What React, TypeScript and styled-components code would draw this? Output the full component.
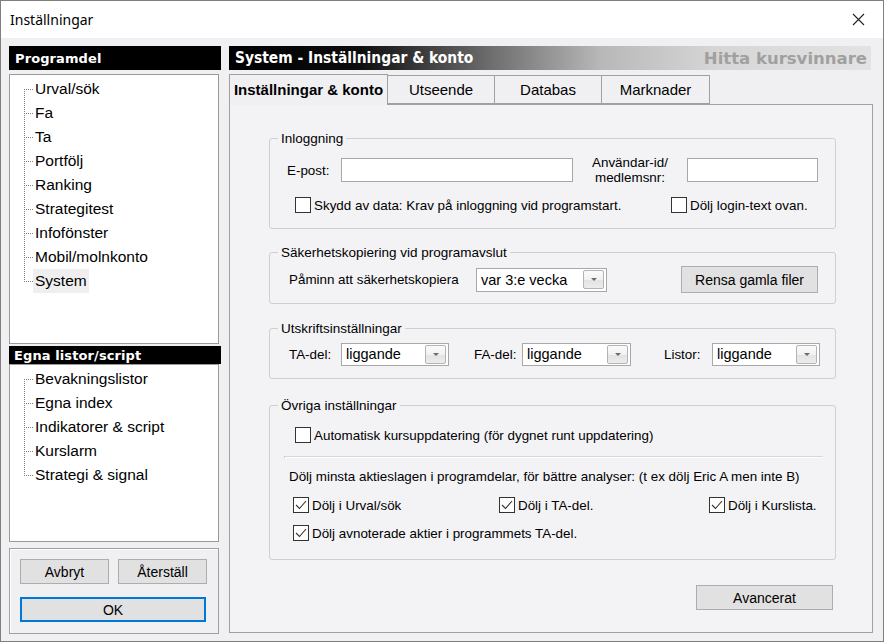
import React from 'react';
import styled, { createGlobalStyle, css } from 'styled-components';

const GlobalStyle = createGlobalStyle`
  html, body {
    margin: 0;
    padding: 0;
    background: #ffffff;
  }

  * {
    box-sizing: border-box;
  }
`;

const uiFont = `'Liberation Sans', Arial, sans-serif`;

const Window = styled.div`
  width: 884px;
  height: 642px;
  border: 1px solid #7f7f7f;
  background: #f0f0f3;
  display: flex;
  flex-direction: column;
  font-family: ${uiFont};
  color: #000;
  overflow: hidden;
`;

const TitleBar = styled.div`
  height: 37px;
  flex-shrink: 0;
  background: #ffffff;
  display: flex;
  align-items: center;
  justify-content: space-between;
  padding: 0 15px 0 9px;
`;

const TitleText = styled.span`
  font-family: 'Noto Sans', 'Open Sans', sans-serif;
  font-size: 14px;
  color: #000;
`;

const CloseButton = styled.span`
  display: flex;
  align-items: center;
  justify-content: center;
  width: 20px;
  height: 20px;
`;

const Body = styled.div`
  flex: 1;
  display: flex;
  gap: 8px;
  padding: 8px 0 0 8px;
`;

const LeftColumn = styled.div`
  width: 212px;
  display: flex;
  flex-direction: column;
`;

const SectionHeader = styled.div<{ $height: number; $gap: number }>`
  height: ${(p) => p.$height}px;
  margin-top: ${(p) => p.$gap}px;
  background: #000;
  color: #fff;
  font-family: 'DejaVu Sans', Verdana, sans-serif;
  font-weight: bold;
  font-size: 13px;
  display: flex;
  align-items: center;
  padding-left: ${(p) => (p.$height > 20 ? 6 : 5)}px;
  letter-spacing: 0.1px;
`;

const TreeBox = styled.div<{ $height: number; $gap: number }>`
  width: 210px;
  height: ${(p) => p.$height}px;
  margin-top: ${(p) => p.$gap}px;
  background: #fff;
  border: 1px solid #9a9a9a;
  padding: 2px 0 0 14px;
`;

const TreeRow = styled.div`
  display: flex;
  align-items: center;
  height: 24px;
`;

const dots = (dir: string) =>
  `repeating-linear-gradient(${dir}, #808080 0 1px, transparent 1px 2px)`;

const Connector = styled.span<{ $pos: 'first' | 'mid' | 'last' }>`
  width: 9px;
  height: 24px;
  flex-shrink: 0;
  background-image: ${dots('to bottom')}, ${dots('to right')};
  background-repeat: no-repeat;
  ${(p) =>
    p.$pos === 'first'
      ? css`
          background-size: 1px 12px, 9px 1px;
          background-position: 0 12px, 0 12px;
        `
      : p.$pos === 'last'
        ? css`
            background-size: 1px 13px, 9px 1px;
            background-position: 0 0, 0 12px;
          `
        : css`
            background-size: 1px 24px, 9px 1px;
            background-position: 0 0, 0 12px;
          `}
`;

const TreeLabel = styled.span<{ $selected?: boolean }>`
  height: 24px;
  line-height: 24px;
  padding: 0 2px;
  font-size: 15.5px;
  background: ${(p) => (p.$selected ? '#efefef' : 'transparent')};
  white-space: nowrap;
`;

const ButtonPanel = styled.div`
  width: 210px;
  height: 86px;
  margin-top: 6px;
  border: 1px solid #a0a0a0;
  box-shadow: inset 1px 1px 0 #ffffff;
  padding: 10px 0 0 10px;
  display: flex;
  flex-direction: column;
  gap: 13px;
`;

const ButtonRow = styled.div`
  display: flex;
  gap: 9px;
`;

const Button = styled.button<{ $width: number; $height?: number; $primary?: boolean; $ml?: number }>`
  width: ${(p) => p.$width}px;
  height: ${(p) => p.$height ?? 25}px;
  margin-left: ${(p) => p.$ml ?? 0}px;
  background: #e1e1e1;
  border: ${(p) => (p.$primary ? '2px solid #0078d7' : '1px solid #adadad')};
  font-family: ${uiFont};
  font-size: 14px;
  color: #000;
  padding: 0;
  flex-shrink: 0;
`;

const RightColumn = styled.div`
  width: 644px;
  display: flex;
  flex-direction: column;
`;

const PageHeader = styled.div`
  height: 24px;
  background: linear-gradient(
    to right,
    #000 0%,
    #0c0c0c 20%,
    #6a6a6a 40%,
    #b8b8b8 58%,
    #d6d6d6 76%,
    #e3e3e3 100%
  );
  display: flex;
  align-items: center;
  justify-content: space-between;
  padding: 0 4px 0 6px;
  margin-right: 2px;
`;

const PageTitle = styled.span`
  font-family: 'DejaVu Sans Condensed', 'DejaVu Sans', sans-serif;
  font-weight: bold;
  font-size: 15.4px;
  color: #fff;
`;

const Slogan = styled.span`
  font-family: 'DejaVu Sans', Verdana, sans-serif;
  font-weight: bold;
  font-size: 16.5px;
  color: #a0a0a0;
`;

const TabRow = styled.div`
  height: 30px;
  margin-top: 4px;
  display: flex;
  align-items: flex-end;
  position: relative;
  z-index: 1;
`;

const Tab = styled.div<{ $width: number; $active?: boolean }>`
  width: ${(p) => p.$width}px;
  height: ${(p) => (p.$active ? 31 : 29)}px;
  margin-bottom: ${(p) => (p.$active ? -1 : 0)}px;
  border: 1px solid #a0a0a0;
  border-bottom: ${(p) => (p.$active ? 'none' : '1px solid #a0a0a0')};
  margin-left: -1px;
  background: #f0f0f3;
  display: flex;
  align-items: center;
  justify-content: center;
  font-size: 15px;
  font-weight: ${(p) => (p.$active ? 'bold' : 'normal')};
  padding-bottom: ${(p) => (p.$active ? 2 : 0)}px;

  &:first-child {
    margin-left: 0;
  }
`;

const TabPage = styled.div`
  flex: 1;
  margin-bottom: 8px;
  border: 1px solid #a0a0a0;
  background: #f3f3f6;
  padding: 26px 0 0 39px;
  display: flex;
  flex-direction: column;
`;

const Group = styled.fieldset<{ $gap?: number; $pt: number; $pb: number }>`
  width: 567px;
  margin: ${(p) => p.$gap ?? 0}px 0 0 0;
  padding: ${(p) => p.$pt}px 0 ${(p) => p.$pb}px 0;
  border: 1px solid #cfcfcf;
  border-radius: 3px;
  min-width: 0;
`;

const Legend = styled.legend`
  margin-left: 8px;
  padding: 0 3px;
  font-size: 13.5px;
  line-height: 15px;
`;

const Row = styled.div<{ $pl: number; $height: number; $mt?: number }>`
  display: flex;
  align-items: center;
  height: ${(p) => p.$height}px;
  padding-left: ${(p) => p.$pl}px;
  margin-top: ${(p) => p.$mt ?? 0}px;
  font-size: 13.4px;
`;

const Cell = styled.div<{ $width: number; $ml?: number; $center?: boolean }>`
  width: ${(p) => p.$width}px;
  margin-left: ${(p) => p.$ml ?? 0}px;
  flex-shrink: 0;
  display: flex;
  align-items: center;
  text-align: ${(p) => (p.$center ? 'center' : 'left')};
  justify-content: ${(p) => (p.$center ? 'center' : 'flex-start')};
  line-height: 15px;
  white-space: nowrap;
`;

const TextInput = styled.div<{ $width: number }>`
  width: ${(p) => p.$width}px;
  height: 24px;
  background: #fff;
  border: 1px solid #a8a8a8;
  flex-shrink: 0;
`;

const SelectBox = styled.div<{ $width: number; $height: number }>`
  width: ${(p) => p.$width}px;
  height: ${(p) => p.$height}px;
  background: #fff;
  border: 1px solid #a8a8a8;
  display: flex;
  align-items: center;
  justify-content: space-between;
  padding: 0 2px 0 4px;
  font-size: 14.5px;
  flex-shrink: 0;
`;

const DropArrow = styled.span`
  width: 21px;
  height: 19px;
  border: 1px solid #b4b4b4;
  border-radius: 2px;
  background: linear-gradient(to bottom, #fbfbfb 0%, #f1f1f1 50%, #e2e2e2 51%, #ececec 100%);
  display: flex;
  align-items: center;
  justify-content: center;

  &::after {
    content: '';
    width: 0;
    height: 0;
    border-left: 3px solid transparent;
    border-right: 3px solid transparent;
    border-top: 3px solid #6a6a6a;
  }
`;

const CheckWrap = styled.label<{ $width?: number }>`
  display: flex;
  align-items: center;
  gap: 3px;
  width: ${(p) => (p.$width ? `${p.$width}px` : 'auto')};
  flex-shrink: 0;
  white-space: nowrap;
`;

const Box = styled.span`
  width: 16px;
  height: 16px;
  border: 1px solid #333;
  background: #fff;
  display: flex;
  align-items: center;
  justify-content: center;
  flex-shrink: 0;
`;

const Separator = styled.div`
  height: 2px;
  margin: 13px 12px 0 14px;
  border-top: 1px solid #d6d6d6;
  border-bottom: 1px solid #ffffff;
  border-left: 1px solid #b8b8b8;
`;

const FooterButton = styled(Button)`
  margin: 25px 0 0 427px;
`;

function Check ({ checked, label, width }: { checked?: boolean; label: string; width?: number }) {
  return (
    <CheckWrap $width={width}>
      <Box>
        {checked && (
          <svg width='12' height='10' viewBox='0 0 12 10'>
            <polyline points='1,5 4.5,8.5 11,1' fill='none' stroke='#333' strokeWidth='1.1' />
          </svg>
        )}
      </Box>
      {label}
    </CheckWrap>
  );
}

function Select ({ value, width, height = 23 }: { value: string; width: number; height?: number }) {
  return (
    <SelectBox $width={width} $height={height}>
      <span>{value}</span>
      <DropArrow />
    </SelectBox>
  );
}

function Tree ({ items, height, gap, selected }: { items: string[]; height: number; gap: number; selected?: string }) {
  return (
    <TreeBox $height={height} $gap={gap}>
      {items.map((item, i) => (
        <TreeRow key={item}>
          <Connector $pos={i === 0 ? 'first' : i === items.length - 1 ? 'last' : 'mid'} />
          <TreeLabel $selected={item === selected}>{item}</TreeLabel>
        </TreeRow>
      ))}
    </TreeBox>
  );
}

const programParts = ['Urval/sök', 'Fa', 'Ta', 'Portfölj', 'Ranking', 'Strategitest', 'Infofönster', 'Mobil/molnkonto', 'System'];
const ownLists = ['Bevakningslistor', 'Egna index', 'Indikatorer & script', 'Kurslarm', 'Strategi & signal'];

export default function App () {
  return (
    <>
      <GlobalStyle />
      <Window>
        <TitleBar>
          <TitleText>Inställningar</TitleText>
          <CloseButton>
            <svg width='13' height='13' viewBox='0 0 13 13'>
              <path d='M1 1 L12 12 M12 1 L1 12' stroke='#222' strokeWidth='1.1' />
            </svg>
          </CloseButton>
        </TitleBar>

        <Body>
          <LeftColumn>
            <SectionHeader $height={24} $gap={0}>Programdel</SectionHeader>
            <Tree items={programParts} height={270} gap={4} selected='System' />
            <SectionHeader $height={18} $gap={2}>Egna listor/script</SectionHeader>
            <Tree items={ownLists} height={178} gap={0} />
            <ButtonPanel>
              <ButtonRow>
                <Button $width={89}>Avbryt</Button>
                <Button $width={89}>Återställ</Button>
              </ButtonRow>
              <Button $width={186} $primary>OK</Button>
            </ButtonPanel>
          </LeftColumn>

          <RightColumn>
            <PageHeader>
              <PageTitle>System - Inställningar &amp; konto</PageTitle>
              <Slogan>Hitta kursvinnare</Slogan>
            </PageHeader>

            <TabRow>
              <Tab $width={159} $active>Inställningar &amp; konto</Tab>
              <Tab $width={108}>Utseende</Tab>
              <Tab $width={108}>Databas</Tab>
              <Tab $width={109}>Marknader</Tab>
            </TabRow>

            <TabPage>
              <Group $pt={12} $pb={15}>
                <Legend>Inloggning</Legend>
                <Row $pl={17} $height={24}>
                  <Cell $width={54}>E-post:</Cell>
                  <TextInput $width={232} />
                  <Cell $width={114} $center>Användar-id/<br />medlemsnr:</Cell>
                  <TextInput $width={131} />
                </Row>
                <Row $pl={25} $height={16} $mt={15}>
                  <Check label='Skydd av data: Krav på inloggning vid programstart.' width={376} />
                  <Check label='Dölj login-text ovan.' />
                </Row>
              </Group>

              <Group $gap={16} $pt={6} $pb={10}>
                <Legend>Säkerhetskopiering vid programavslut</Legend>
                <Row $pl={19} $height={27}>
                  <Cell $width={187}>Påminn att säkerhetskopiera</Cell>
                  <Select value='var 3:e vecka' width={131} height={24} />
                  <Button $width={137} $height={27} $ml={74}>Rensa gamla filer</Button>
                </Row>
              </Group>

              <Group $gap={17} $pt={6} $pb={12}>
                <Legend>Utskriftsinställningar</Legend>
                <Row $pl={19} $height={24}>
                  <Cell $width={52}>TA-del:</Cell>
                  <Select value='liggande' width={108} />
                  <Cell $width={48} $ml={25}>FA-del:</Cell>
                  <Select value='liggande' width={109} />
                  <Cell $width={48} $ml={33}>Listor:</Cell>
                  <Select value='liggande' width={108} />
                </Row>
              </Group>

              <Group $gap={19} $pt={14} $pb={18}>
                <Legend>Övriga inställningar</Legend>
                <Row $pl={25} $height={16}>
                  <Check label='Automatisk kursuppdatering (för dygnet runt uppdatering)' />
                </Row>
                <Separator />
                <Row $pl={19} $height={16} $mt={10}>
                  Dölj minsta aktieslagen i programdelar, för bättre analyser: (t ex dölj Eric A men inte B)
                </Row>
                <Row $pl={23} $height={16} $mt={13}>
                  <Check checked label='Dölj i Urval/sök' width={206} />
                  <Check checked label='Dölj i TA-del.' width={210} />
                  <Check checked label='Dölj i Kurslista.' />
                </Row>
                <Row $pl={23} $height={16} $mt={12}>
                  <Check checked label='Dölj avnoterade aktier i programmets TA-del.' />
                </Row>
              </Group>

              <FooterButton $width={137}>Avancerat</FooterButton>
            </TabPage>
          </RightColumn>
        </Body>
      </Window>
    </>
  );
}
